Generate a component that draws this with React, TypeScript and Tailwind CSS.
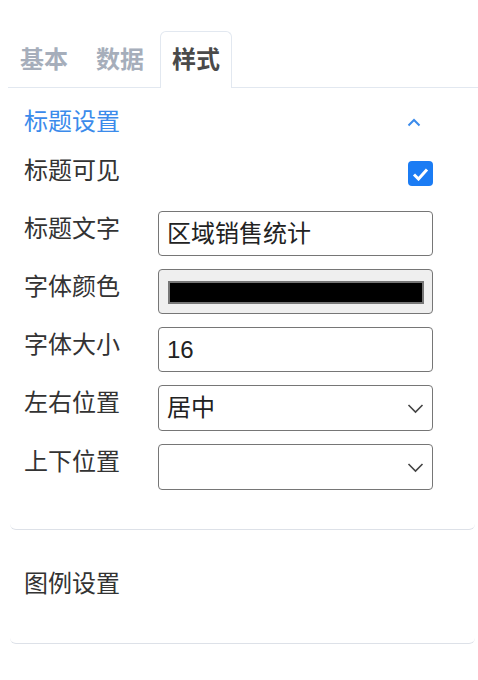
import { ReactNode } from 'react'

const font = { fontFamily: '"Liberation Sans", "Noto Sans CJK SC", sans-serif' }

function Tab({ children, active }: { children: ReactNode; active?: boolean }) {
  return (
    <div
      className={
        active
          ? 'mr-1 -mb-px flex h-[57px] items-center rounded-t-md border border-b-0 border-[#e2e8f0] bg-white px-[11px] text-[24px] font-bold text-[#4a4a4a]'
          : 'mr-1 -mb-px flex h-[57px] items-center border border-b-0 border-transparent px-[11px] text-[24px] font-bold text-[#a6aebb]'
      }
    >
      {children}
    </div>
  )
}

function Row({ label, children }: { label: string; children: ReactNode }) {
  return (
    <div className="flex items-start">
      <div className="w-[134px] text-[24px] leading-[36px] text-[#333]">{label}</div>
      <div className="flex-1">{children}</div>
    </div>
  )
}

function Chevron() {
  return (
    <svg width="17" height="11" viewBox="0 0 17 11" fill="none">
      <path d="M1.5 2l7 7 7-7" stroke="#444" strokeWidth="1.6" />
    </svg>
  )
}

function Select({ value }: { value: string }) {
  return (
    <div className="relative h-[46px] rounded-[4px] border border-[#767676] bg-white">
      <div className="px-2 text-[24px] leading-[44px] text-[#222]">{value}</div>
      <div className="absolute right-[8px] top-[17px]">
        <Chevron />
      </div>
    </div>
  )
}

export default function App() {
  return (
    <div className="bg-white pb-8 pl-2 pt-[31px]" style={font}>
      <div className="flex border-b border-[#e2e8f0]">
        <Tab>基本</Tab>
        <Tab>数据</Tab>
        <Tab active>样式</Tab>
      </div>
      <div className="ml-[2px] mr-[3px]">
        <section className="rounded-b-md border-b border-[#dde1e8] pb-[39px] pl-[14px] pr-[42px] pt-4">
          <div className="flex flex-col gap-[13px]">
            <div className="flex h-[36px] items-center justify-between">
              <span className="text-[24px] leading-[36px] text-[#3b8beb]">标题设置</span>
              <svg className="mr-[12px]" width="14" height="9" viewBox="0 0 14 9" fill="none">
                <path d="M1.5 7.5L7 2l5.5 5.5" stroke="#3b8beb" strokeWidth="2" />
              </svg>
            </div>
            <div className="flex h-[45px] items-start justify-between">
              <span className="text-[24px] leading-[36px] text-[#333]">标题可见</span>
              <div className="mt-2 flex h-[25px] w-[25px] items-center justify-center rounded-[4px] bg-[#1b7cf4]">
                <svg width="17" height="14" viewBox="0 0 17 14" fill="none">
                  <path d="M2 7.5l4.5 4.5L15 2.5" stroke="white" strokeWidth="3" />
                </svg>
              </div>
            </div>
            <Row label="标题文字">
              <div className="h-[45px] rounded-[4px] border border-[#767676] bg-white px-2 text-[24px] leading-[43px] text-[#222]">
                区域销售统计
              </div>
            </Row>
            <Row label="字体颜色">
              <div className="h-[45px] rounded-[4px] border border-[#767676] bg-[#efefef] pb-[10px] pl-[9px] pr-[8px] pt-[11px]">
                <div className="h-[23px] border-2 border-[#777] bg-black"></div>
              </div>
            </Row>
            <Row label="字体大小">
              <div className="h-[45px] rounded-[4px] border border-[#767676] bg-white px-2 text-[24px] leading-[43px] text-[#222]">
                16
              </div>
            </Row>
            <Row label="左右位置">
              <Select value="居中" />
            </Row>
            <Row label="上下位置">
              <Select value="" />
            </Row>
          </div>
        </section>
        <section className="rounded-b-md border-b border-[#dde1e8] pb-[41px] pl-[14px] pr-[42px] pt-9">
          <div className="text-[24px] leading-[36px] text-[#333]">图例设置</div>
        </section>
      </div>
    </div>
  )
}
